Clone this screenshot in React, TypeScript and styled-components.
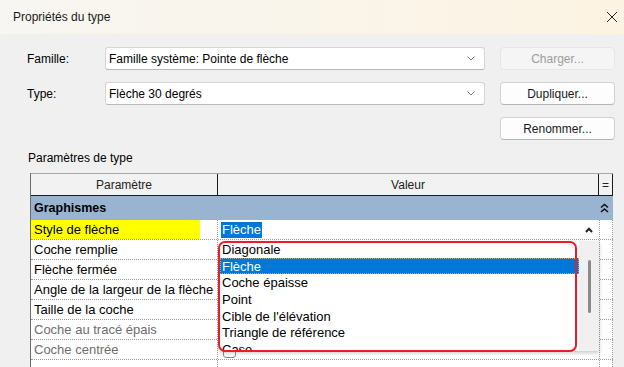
import React from 'react'
import styled, { createGlobalStyle } from 'styled-components'

const GlobalStyle = createGlobalStyle`
  html, body {
    margin: 0;
    padding: 0;
    background: #f0f0f0;
  }
  body {
    font-family: "Liberation Sans", Arial, sans-serif;
    color: #000;
  }
`

const Window = styled.div`
  width: 624px;
  height: 367px;
  overflow: hidden;
  display: flex;
  flex-direction: column;
  background: #f0f0f0;
`

const TitleBar = styled.div`
  height: 34px;
  flex: none;
  display: flex;
  align-items: center;
  justify-content: space-between;
  padding: 0 5px 0 13px;
  background: linear-gradient(to right, #f8f6f2, #fcf3e2);
`

const Title = styled.span`
  font-size: 12px;
  color: #1a1a1a;
`

const CloseIcon = styled.svg`
  width: 12px;
  height: 12px;
  margin-right: 1px;
`

const Body = styled.div`
  padding: 13px 9px 0 27px;
`

const FormGrid = styled.div`
  display: grid;
  grid-template-columns: 63px 380px 115px;
  grid-auto-rows: 23px;
  column-gap: 15px;
  row-gap: 12px;
  align-items: center;
`

const Label = styled.span`
  font-size: 12px;
`

const Combo = styled.div`
  height: 23px;
  box-sizing: border-box;
  display: flex;
  align-items: center;
  justify-content: space-between;
  padding: 0 9px 0 3px;
  background: #fff;
  border: 1px solid #d5d5d5;
  border-bottom-color: #b8b8b8;
  border-radius: 3px;
  font-size: 12px;
`

const Chevron = styled.svg`
  width: 8px;
  height: 5px;
`

const Button = styled.div<{ $disabled?: boolean }>`
  height: 23px;
  box-sizing: border-box;
  display: flex;
  align-items: center;
  justify-content: center;
  font-size: 12px;
  border-radius: 4px;
  background: ${(p) => (p.$disabled ? '#f5f5f5' : '#fdfdfd')};
  border: 1px solid ${(p) => (p.$disabled ? '#e6e6e6' : '#d2d2d2')};
  border-bottom-color: ${(p) => (p.$disabled ? '#e6e6e6' : '#b5b5b5')};
  color: ${(p) => (p.$disabled ? '#9d9d9d' : '#1a1a1a')};
`

const SectionLabel = styled.div`
  font-size: 12px;
  margin: 11px 0 0 1px;
  height: 15px;
  line-height: 15px;
`

const TableWrap = styled.div`
  position: relative;
  margin: 7px 0 0 3px;
  width: 583px;
  box-sizing: border-box;
  border-left: 1px solid #6a6a6a;
  height: 200px;
  background: #fff;
`

const HeaderRow = styled.div`
  display: grid;
  grid-template-columns: 187px 381px 14px;
  height: 23px;
  box-sizing: border-box;
  border-top: 1px solid #a8a8a8;
  border-bottom: 1px solid #1a1a1a;
  background: #f2f2f2;
`

const HeaderCell = styled.div`
  display: flex;
  align-items: center;
  justify-content: center;
  font-size: 12px;
  border-right: 1px solid #1a1a1a;
  color: #222;
`

const GroupRow = styled.div`
  display: grid;
  grid-template-columns: 568px 14px;
  height: 24px;
  background: #99b4d1;
  align-items: center;
`

const GroupTitle = styled.span`
  font-weight: bold;
  font-size: 12.5px;
  padding-left: 3px;
`

const GroupToggle = styled.svg`
  width: 9px;
  height: 10px;
  margin-left: 1px;
`

const DataRow = styled.div`
  display: grid;
  grid-template-columns: 187px 381px 14px;
  height: 20px;
  box-sizing: border-box;
  border-bottom: 1px dotted #9a9a9a;
`

const ParamCell = styled.div<{ $muted?: boolean; $marked?: boolean }>`
  display: flex;
  align-items: center;
  font-size: 13px;
  border-right: 1px dotted #9a9a9a;
  color: ${(p) => (p.$muted ? '#6d6d6d' : '#000')};
  white-space: nowrap;
  overflow: hidden;
`

const Marker = styled.span<{ $marked?: boolean }>`
  display: flex;
  align-items: center;
  height: 100%;
  padding-left: 3px;
  width: ${(p) => (p.$marked ? '166px' : 'auto')};
  background: ${(p) => (p.$marked ? '#ffff00' : 'transparent')};
`

const ValueCell = styled.div`
  display: flex;
  align-items: center;
  justify-content: space-between;
  padding: 0 6px 0 3px;
  font-size: 13px;
`

const Selected = styled.span`
  background: #0078d7;
  color: #fff;
  padding: 0 1px;
  line-height: 16px;
`

const EqCell = styled.div`
  border-left: 1px dotted #9a9a9a;
  border-right: 1px dotted #9a9a9a;
  display: flex;
  align-items: center;
  justify-content: center;
  font-size: 12px;
`

const Caret = styled.svg`
  width: 8px;
  height: 6px;
`

const CheckBox = styled.span`
  width: 13px;
  height: 13px;
  box-sizing: border-box;
  margin: 3px 0 0 2px;
  border: 1px solid #8d8d8d;
  border-radius: 3px;
  background: #fdfdfd;
`

const Dropdown = styled.div`
  position: absolute;
  left: 189px;
  top: 68px;
  width: 379px;
  height: 110px;
  display: flex;
  background: #fff;
  box-shadow: 0 2px 4px rgba(0, 0, 0, 0.22);
`

const OptionList = styled.div`
  flex: 1;
  display: flex;
  flex-direction: column;
  overflow: hidden;
`

const Option = styled.div<{ $active?: boolean }>`
  height: 16.7px;
  flex: none;
  box-sizing: border-box;
  display: flex;
  align-items: center;
  padding-left: 2px;
  font-size: 13px;
  background: ${(p) => (p.$active ? '#0078d7' : 'transparent')};
  color: ${(p) => (p.$active ? '#fff' : '#000')};
  outline: ${(p) => (p.$active ? '1px dotted #e8a040' : 'none')};
  outline-offset: -1px;
`

const ScrollTrack = styled.div`
  width: 20px;
  flex: none;
  background: #f0f0f0;
  display: flex;
  justify-content: center;
  padding-top: 19px;
  box-sizing: border-box;
`

const ScrollThumb = styled.div`
  width: 3px;
  height: 53px;
  border-radius: 2px;
  background: #8a8a8a;
`

const Annotation = styled.div`
  position: absolute;
  left: 187px;
  top: 68px;
  width: 359px;
  height: 111px;
  box-sizing: border-box;
  border: 2.5px solid #ee1c24;
  border-radius: 7px;
  pointer-events: none;
`

type Param = { name: string; muted?: boolean; check?: boolean }

const rows: Param[] = [
  { name: 'Coche remplie', check: true },
  { name: 'Flèche fermée', check: true },
  { name: 'Angle de la largeur de la flèche' },
  { name: 'Taille de la coche' },
  { name: 'Coche au tracé épais', muted: true, check: true },
  { name: 'Coche centrée', muted: true, check: true },
  { name: '' },
]

const options = [
  'Diagonale',
  'Flèche',
  'Coche épaisse',
  'Point',
  "Cible de l'élévation",
  'Triangle de référence',
  'Case',
]

const ComboChevron = () => (
  <Chevron viewBox="0 0 8 5">
    <polyline points="0.5,0.5 4,4 7.5,0.5" fill="none" stroke="#7a7a7a" strokeWidth="1" />
  </Chevron>
)

const App = () => {
  return (
    <Window>
      <GlobalStyle />
      <TitleBar>
        <Title>Propriétés du type</Title>
        <CloseIcon viewBox="0 0 12 12">
          <path d="M1 1 L11 11 M11 1 L1 11" stroke="#222" strokeWidth="1" />
        </CloseIcon>
      </TitleBar>

      <Body>
        <FormGrid>
          <Label>Famille:</Label>
          <Combo>
            Famille système: Pointe de flèche
            <ComboChevron />
          </Combo>
          <Button $disabled>Charger...</Button>

          <Label>Type:</Label>
          <Combo>
            Flèche 30 degrés
            <ComboChevron />
          </Combo>
          <Button>Dupliquer...</Button>

          <span />
          <span />
          <Button>Renommer...</Button>
        </FormGrid>

        <SectionLabel>Paramètres de type</SectionLabel>

        <TableWrap>
          <HeaderRow>
            <HeaderCell>Paramètre</HeaderCell>
            <HeaderCell>Valeur</HeaderCell>
            <HeaderCell>=</HeaderCell>
          </HeaderRow>

          <GroupRow>
            <GroupTitle>Graphismes</GroupTitle>
            <GroupToggle viewBox="0 0 9 10">
              <polyline points="1,4.5 4.5,1.5 8,4.5" fill="none" stroke="#111" strokeWidth="1.6" />
              <polyline points="1,9 4.5,6 8,9" fill="none" stroke="#111" strokeWidth="1.6" />
            </GroupToggle>
          </GroupRow>

          <DataRow>
            <ParamCell>
              <Marker $marked>Style de flèche</Marker>
            </ParamCell>
            <ValueCell>
              <Selected>Flèche</Selected>
              <Caret viewBox="0 0 8 6">
                <polyline points="1,5 4,1.8 7,5" fill="none" stroke="#222" strokeWidth="2" />
              </Caret>
            </ValueCell>
            <EqCell />
          </DataRow>

          {rows.map((r, i) => (
            <DataRow key={i}>
              <ParamCell $muted={r.muted}>
                <Marker>{r.name}</Marker>
              </ParamCell>
              <ValueCell>{r.check && <CheckBox />}</ValueCell>
              <EqCell />
            </DataRow>
          ))}

          <Dropdown>
            <OptionList>
              {options.map((o) => (
                <Option key={o} $active={o === 'Flèche'}>
                  {o}
                </Option>
              ))}
            </OptionList>
            <ScrollTrack>
              <ScrollThumb />
            </ScrollTrack>
          </Dropdown>

          <Annotation />
        </TableWrap>
      </Body>
    </Window>
  )
}

export default App
